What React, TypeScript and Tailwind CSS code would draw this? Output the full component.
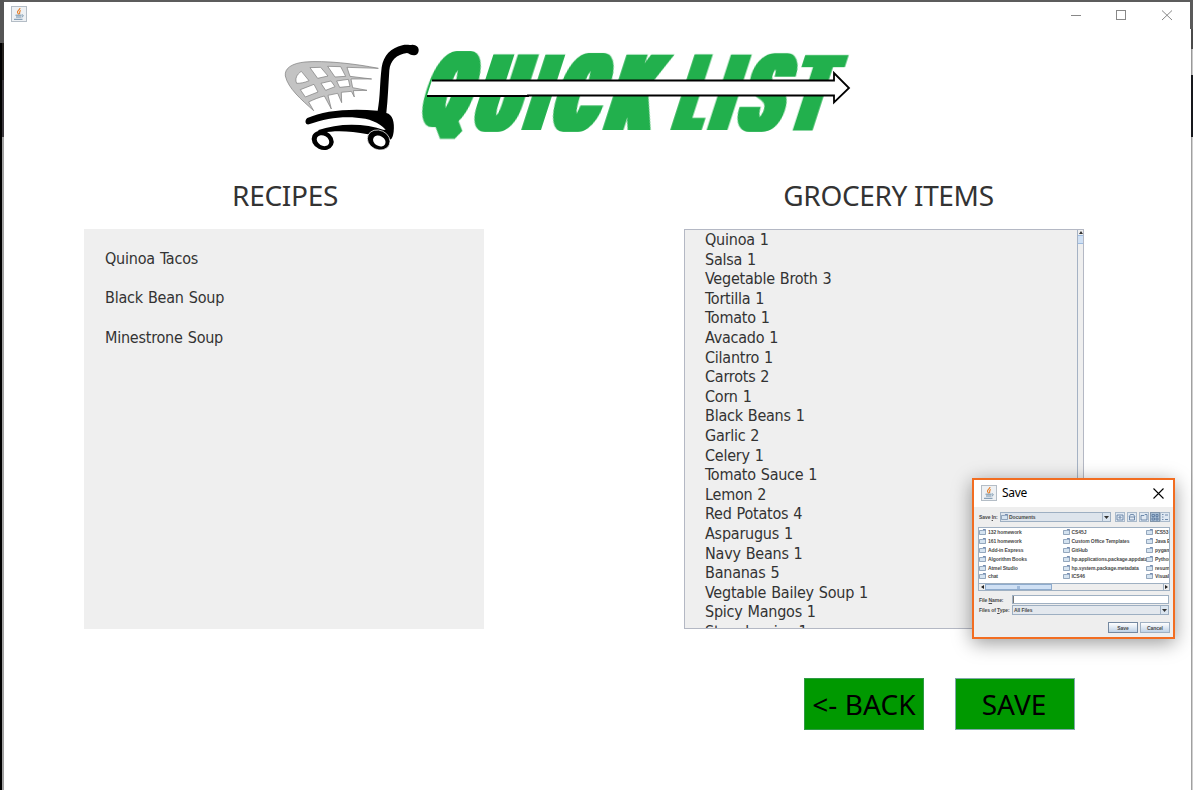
import React from "react";

type GlyphSpec = {
  char: string;
  left: number;
  right: number;
  top: number;
  bottom: number;
  grow: 6 | 7;
};

const BASELINE = 130;
const FAMILY = "Roboto";
const WEIGHT = 700;

const GLYPHS: GlyphSpec[] = [
  { char: "Q", left: 413.5, right: 463, top: 52, bottom: 140, grow: 7 },
  { char: "U", left: 468.5, right: 515, top: 54, bottom: 132, grow: 6 },
  { char: "I", left: 521, right: 541, top: 54, bottom: 130, grow: 6 },
  { char: "C", left: 546, right: 596, top: 52, bottom: 132, grow: 7 },
  { char: "K", left: 602, right: 651, top: 54, bottom: 130, grow: 6 },
  { char: "L", left: 670, right: 702, top: 54, bottom: 130, grow: 6 },
  { char: "I", left: 706.5, right: 727.5, top: 54, bottom: 130, grow: 6 },
  { char: "S", left: 732, right: 779, top: 52, bottom: 132, grow: 6 },
  { char: "T", left: 781, right: 825, top: 54, bottom: 130, grow: 6 },
];

/** Scales one heavy glyph so that its ink fills the given box. */
function LogoGlyph({ char, left, right, top, bottom, grow }: GlyphSpec) {
  const ctx = document.createElement("canvas").getContext("2d")!;
  ctx.font = `${WEIGHT} 100px "${FAMILY}"`;
  const m = ctx.measureText(char);
  const inkWidth = m.actualBoundingBoxLeft + m.actualBoundingBoxRight;
  const inkHeight = m.actualBoundingBoxAscent + m.actualBoundingBoxDescent;
  const sx = (right - left - 2 * grow) / inkWidth;
  const sy = (bottom - top) / inkHeight;
  const tx = left + grow + m.actualBoundingBoxLeft * sx;
  const ty = top - BASELINE + m.actualBoundingBoxAscent * sy;
  return (
    <text
      transform={`translate(${tx} ${ty}) scale(${sx} ${sy})`}
      fontFamily={`"${FAMILY}", sans-serif`}
      fontWeight={WEIGHT}
      fontSize={100}
    >
      {char}
    </text>
  );
}

function Logo() {
  return (
    <svg className="block h-[130px] w-[590px] shrink-0" viewBox="270 30 590 130">
      <defs>
        {[6, 7].map((r) => (
          <filter key={r} id={`widen-${r}`} filterUnits="userSpaceOnUse" x="270" y="-100" width="650" height="130">
            <feMorphology operator="dilate" radius={`${r} 0`} />
          </filter>
        ))}
      </defs>
      <g transform="translate(270 30) scale(0.33333)">
        <path
          fillRule="evenodd"
          fill="#c3c3c3"
          stroke="#777"
          strokeWidth="2"
          d="M325 115 C255 101 165 91 105 96 C65 100 43 115 46 138 C54 175 95 210 131 242 L116 216 C132 208 145 203 163 198 L184 237 L174 196 L203 190 L215 218 L214 187 L244 184 L253 201 L250 182 L291 181 L248 173 L243 147 L305 147 L240 139 L231 112 Z
          M94 124 L117 152 C104 158 92 160 80 160 C74 147 80 133 94 124 Z
          M120 113 L152 112 L174 138 L143 145 Z
          M173 109 L212 110 L227 139 L195 141 Z
          M91 179 L132 163 L144 186 L106 201 Z
          M153 160 L183 153 L195 170 L167 181 Z
          M200 153 L235 148 L240 169 L209 172 Z"
        />
        <path
          fill="#000"
          d="M323 242 C331 200 329 160 335 112 C341 77 362 54 397 46 C408 43 419 46 427 44 C450 43 451 70 437 75 C426 79 419 71 411 69 C379 74 361 91 358 121 C355 165 354 207 349 249 C368 253 374 277 371 305 C368 327 361 334 354 324 C344 309 340 305 338 300 L347 299 C326 276 297 265 260 263 C207 259 165 267 117 283 C104 285 104 270 112 264 C160 242 238 234 323 242 Z"
        />
        <path fill="#000" d="M143 301 C205 278 286 279 342 300 L350 311 L315 304 L294 313 C240 302 195 301 158 308 Z" />
        <ellipse cx="158" cy="331" rx="34" ry="28" transform="rotate(25 158 331)" fill="#000" />
        <ellipse cx="159" cy="332" rx="20" ry="15" transform="rotate(30 159 332)" fill="#fff" />
        <ellipse cx="326" cy="330" rx="35" ry="29" transform="rotate(25 326 330)" fill="#000" stroke="#fff" strokeWidth="2" />
        <ellipse cx="328" cy="333" rx="20" ry="15" transform="rotate(30 328 333)" fill="#fff" />
      </g>
      <g transform={`translate(0 ${BASELINE}) skewX(-17.9)`} fill="#24b04d">
        {GLYPHS.map((g, i) => (
          <g key={i} filter={`url(#widen-${g.grow})`}>
            <LogoGlyph {...g} />
          </g>
        ))}
      </g>
      <path d="M432 80 H834 V73 L849 88 L834 102.500 V95.500 H427 Z" fill="#fff" />
      <path
        d="M432 80.500 H834 V73 L849 88 L834 102.500 V95.500 H528 V96 H427"
        fill="none"
        stroke="#000"
        strokeWidth="1.800"
      />
    </svg>
  );
}

function JavaIcon() {
  return (
    <svg className="block size-4 shrink-0" viewBox="0 0 16 16">
      <rect x="0.500" y="0.500" width="15" height="15" fill="#eef1f4" stroke="#b4bdc6" />
      <path d="M9 2 C9 4 6 4.500 6.500 6.500 C6.700 7.500 7.500 7.500 7.500 8.500 M9.800 4.500 C7.500 5.500 9.500 6.500 8.300 8.200" fill="none" stroke="#e8832f" strokeWidth="1.200" />
      <path d="M4.500 9.200 H10.500 M5 11 H10 M3 13.300 H11.500 M10.800 9 C13 8.500 12.500 11 10.500 11" fill="none" stroke="#6f8ea8" strokeWidth="1" />
    </svg>
  );
}

const RECIPES = ["Quinoa Tacos", "Black Bean Soup", "Minestrone Soup"];

const GROCERIES = [
  "Quinoa 1",
  "Salsa 1",
  "Vegetable Broth 3",
  "Tortilla 1",
  "Tomato 1",
  "Avacado 1",
  "Cilantro 1",
  "Carrots 2",
  "Corn 1",
  "Black Beans 1",
  "Garlic 2",
  "Celery 1",
  "Tomato Sauce 1",
  "Lemon 2",
  "Red Potatos 4",
  "Asparugus 1",
  "Navy Beans 1",
  "Bananas 5",
  "Vegtable Bailey Soup 1",
  "Spicy Mangos 1",
  "Strawberries 1",
];

const FILE_COLUMNS = [
  ["132 homework", "161 homework", "Add-in Express", "Algorithm Books", "Atmel Studio", "chat"],
  ["CS45J", "Custom Office Templates", "GitHub", "hp.applications.package.appdata", "hp.system.package.metadata", "ICS46"],
  ["ICS53", "Java E", "pygam", "Python", "resum", "Visual"],
];

function FolderIcon() {
  return (
    <svg className="block h-[6px] w-[7px] shrink-0" viewBox="0 0 7 6">
      <path d="M0.500 5.500 V1.500 H3.500 L4.300 0.500 H6.500 V5.500 Z" fill="#d5e3f0" stroke="#6f87a3" strokeWidth="0.700" />
      <path d="M4 1 H6.500" stroke="#4c6a9c" strokeWidth="0.900" />
    </svg>
  );
}

function DropArrow() {
  return (
    <div className="flex w-[8px] shrink-0 items-center justify-center self-stretch border-l border-[#a4b4c6] bg-[#dbe5ef]">
      <svg className="block h-[3px] w-[5px]" viewBox="0 0 5 3">
        <path d="M0 0 H5 L2.500 3 Z" fill="#333" />
      </svg>
    </div>
  );
}

function ToolButton({ pressed, children }: { pressed?: boolean; children: React.ReactNode }) {
  return (
    <div className={pressed ? "h-[10px] w-[10px] border border-[#8296ab] bg-[#a9bfd6]" : "h-[10px] w-[10px] border border-[#a9b9ca] bg-[#dfe8f2]"}>
      <svg className="block size-2" viewBox="0 0 8 8" fill="none" stroke="#55759a" strokeWidth="0.800">
        {children}
      </svg>
    </div>
  );
}

function SaveDialog() {
  return (
    <div className="absolute top-[478px] left-[972px] flex h-[161px] w-[203px] flex-col border-2 border-[#f26d21] bg-[#eeeeee] font-['Liberation_Sans',sans-serif] text-[5px] leading-[6px] font-bold tracking-[-0.090px] text-[#4a4a4a] shadow-[0_4px_18px_rgba(0,0,0,0.4)]">
      <div className="flex h-[27px] shrink-0 items-center bg-white pr-[9px] pb-px pl-[7px]">
        <JavaIcon />
        <span className="ml-[5px] font-['Noto_Sans',sans-serif] text-[12px] leading-4 font-normal tracking-[-0.300px] text-black">Save</span>
        <svg className="ml-auto block size-[11px]" viewBox="0 0 11 11">
          <path d="M0.500 0.500 L10.500 10.500 M10.500 0.500 L0.500 10.500" stroke="#000" strokeWidth="1.100" />
        </svg>
      </div>

      <div className="mt-[5px] flex h-[10px] shrink-0 items-center pl-[5px]">
        <span className="w-[21px] shrink-0">
          Save <u>I</u>n:
        </span>
        <div className="flex h-[10px] w-[111px] items-center border border-[#9dafc2] bg-[#dde4ec]">
          <FolderIcon />
          <span className="ml-[1px] flex-1">Documents</span>
          <DropArrow />
        </div>
        <div className="ml-[4px] flex">
          <div className="flex gap-[2px]">
            <ToolButton>
              <path d="M1 7 V2 H7 V7 Z M4 6 V3.500 M2.500 5 L4 3.500 L5.500 5" />
            </ToolButton>
            <ToolButton>
              <path d="M1 4 L2.500 1.500 H5.500 L7 4 M1.500 4 V7 H6.500 V4 Z" />
            </ToolButton>
            <ToolButton>
              <path d="M1 7 V2.500 H4 L5 1.500 H7 V7 Z" />
            </ToolButton>
          </div>
          <div className="ml-[1px] flex">
            <ToolButton pressed>
              <path d="M1 1.500 H3.500 V3.500 H1 Z M5 1.500 H7 V3.500 H5 Z M1 5 H3.500 V7 H1 Z M5 5 H7 V7 H5 Z" />
            </ToolButton>
            <ToolButton>
              <path d="M1 1.500 H2.500 M1 4 H2.500 M1 6.500 H2.500 M4 2 H7 M4 6.500 H7" />
            </ToolButton>
          </div>
        </div>
      </div>

      <div className="mt-[5px] ml-[4px] flex h-[64px] w-[192px] shrink-0 flex-col border border-[#9fb0c2] bg-white">
        <div className="flex min-h-0 flex-1 overflow-hidden">
          {FILE_COLUMNS.map((files, c) => (
            <div key={c} className="w-[83.500px] shrink-0">
              {files.map((name) => (
                <div key={name} className="flex h-[8.800px] items-center gap-[2px] whitespace-nowrap">
                  <FolderIcon />
                  <span>{name}</span>
                </div>
              ))}
            </div>
          ))}
        </div>
        <div className="flex h-[7px] shrink-0 items-stretch border-t border-[#9fb0c2] bg-[#eeeeee]">
          <div className="flex w-[6px] items-center justify-center">
            <svg className="block h-[4px] w-[3px]" viewBox="0 0 3 4">
              <path d="M3 0 V4 L0 2 Z" fill="#222" />
            </svg>
          </div>
          <div className="flex w-[67px] items-center justify-center border border-[#8eabcd] bg-[#cfe0f4]">
            <div className="h-[3px] w-[3px] bg-[#9fbadb]" />
          </div>
          <div className="ml-auto flex w-[6px] items-center justify-center border-l border-[#9fb0c2]">
            <svg className="block h-[4px] w-[3px]" viewBox="0 0 3 4">
              <path d="M0 0 V4 L3 2 Z" fill="#222" />
            </svg>
          </div>
        </div>
      </div>

      <div className="mt-[4px] flex h-[9px] shrink-0 items-center pl-[5px]">
        <span className="w-[33px] shrink-0">
          File <u>N</u>ame:
        </span>
        <div className="h-[9px] w-[157px] border border-[#9fb0c2] bg-white">
          <div className="h-full w-px bg-[#777]" />
        </div>
      </div>
      <div className="mt-[1px] flex h-[10px] shrink-0 items-center pl-[5px]">
        <span className="w-[33px] shrink-0 whitespace-nowrap">
          Files of <u>T</u>ype:
        </span>
        <div className="flex h-[10px] w-[157px] items-center border border-[#9dafc2] bg-[#e3e8ee] pl-px">
          <span className="flex-1">All Files</span>
          <DropArrow />
        </div>
      </div>
      <div className="mt-[7px] flex shrink-0 justify-end gap-[2px] pr-[3px]">
        <div className="h-[11px] w-[30px] border border-[#7488a0] bg-linear-to-b from-white to-[#bfd2e6] text-center leading-[10px]">Save</div>
        <div className="h-[11px] w-[30px] border border-[#9fb0c2] bg-linear-to-b from-white to-[#bfd2e6] text-center leading-[10px]">Cancel</div>
      </div>
    </div>
  );
}

function LeftEdge() {
  return (
    <div className="flex h-[790px] w-1 shrink-0 flex-col">
      <div className="h-[43px] bg-[#555]" />
      <div className="flex flex-1">
        <div className="w-[2px] bg-black" />
        <div className="flex w-[2px] flex-col">
          <div className="h-[37px] bg-[#24211e]" />
          <div className="h-[57px] bg-[#3a373c]" />
          <div className="flex-1 bg-[#a0a0a0]" />
        </div>
      </div>
    </div>
  );
}

function RightEdge() {
  return (
    <div className="flex h-[790px] w-[5px] shrink-0 flex-col items-start">
      <div className="h-[29px] w-[3px] bg-[#5a5a5a]" />
      <div className="ml-px h-[20px] w-[2px] bg-[#4a4a4a]" />
      <div className="ml-px h-[26px] w-[2px] border-l border-[#999] bg-[#c8c8c8]" />
      <div className="ml-px h-[62px] w-[2px] bg-[#16181c]" />
      <div className="ml-px w-[2px] flex-1 border-l border-[#a0a0a0] bg-[#d0d0d0]" />
    </div>
  );
}

export default function App() {
  return (
    <div className="relative flex h-[794px] w-[1195px] overflow-hidden bg-white font-['Noto_Sans',sans-serif] text-[#333]">
      <LeftEdge />
      <div className="flex w-[1186px] shrink-0 flex-col">
        <div className="h-[2px] shrink-0 bg-[#5c5c5c]" />
        <div className="flex h-[28px] shrink-0 items-center pr-[18px] pl-[7px]">
          <div className="-mt-[4px]">
            <JavaIcon />
          </div>
          <svg className="-mt-[2px] ml-auto block h-[11px] w-[101px]" viewBox="0 0 101 11" fill="none" stroke="#888">
            <path d="M0 5.500 H10" />
            <rect x="45.500" y="0.500" width="9" height="9" />
            <path d="M91 0.500 L101 10 M101 0.500 L91 10" />
          </svg>
        </div>
        <div className="pl-[266px]">
          <Logo />
        </div>
        <div className="mt-[15px] flex shrink-0 items-start gap-[200px] pl-[80px]">
          <section className="w-[400px]">
            <h1 className="pl-[2px] text-center text-[28px] leading-[40px] tracking-[-0.300px]">RECIPES</h1>
            <ul className="mt-[14px] h-[400px] bg-[#efefef] px-[21px] pt-[10px] font-['DejaVu_Sans_Condensed','DejaVu_Sans',sans-serif] text-[16px] leading-[39.300px] tracking-[-0.230px] [word-spacing:0.800px] font-stretch-condensed">
              {RECIPES.map((r) => (
                <li key={r}>{r}</li>
              ))}
            </ul>
          </section>
          <section className="w-[400px]">
            <h1 className="pl-[9px] text-center text-[28px] leading-[40px] tracking-[-0.350px]">GROCERY ITEMS</h1>
            <div className="mt-[14px] flex h-[400px] border border-[#b4b8c4] bg-[#efefef]">
              <ul className="flex-1 overflow-hidden pl-[20px] font-['DejaVu_Sans_Condensed','DejaVu_Sans',sans-serif] text-[16px] leading-[19.600px] tracking-[-0.230px] [word-spacing:0.600px] font-stretch-condensed">
                {GROCERIES.map((g) => (
                  <li key={g}>{g}</li>
                ))}
              </ul>
              <div className="flex w-[6px] flex-col items-center border-l border-[#a5b2c4]">
                <svg className="mt-[1px] block h-[3px] w-[4px]" viewBox="0 0 4 3">
                  <path d="M0 3 H4 L2 0 Z" fill="#333" />
                </svg>
                <div className="mt-[1px] h-[9px] w-full border-y border-[#9dbbe0] bg-[#cfe0f4]" />
              </div>
            </div>
          </section>
        </div>
        <div className="mt-[49px] flex gap-[31px] pl-[800px] text-[28px] text-black">
          <button className="h-[52px] w-[120px] border border-[#2f9a45] bg-[#009900] leading-none tracking-[0.100px] whitespace-nowrap">&lt;- BACK</button>
          <button className="h-[52px] w-[120px] border border-[#7fa9a8] bg-[#009900] pr-[2px] leading-none tracking-[0px]">SAVE</button>
        </div>
      </div>
      <RightEdge />
      <SaveDialog />
    </div>
  );
}
